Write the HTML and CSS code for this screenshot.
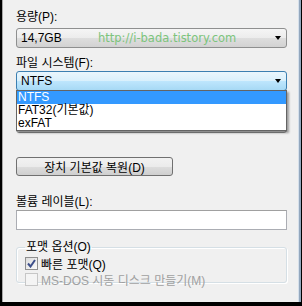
FILE: index.html
```html
<!DOCTYPE html>
<html>
<head>
    <title>포맷</title>
    <link rel="stylesheet" href="styles.css">
</head>
<body>
    <div class="frame">
        <div class="label">용량(P):</div>
        <div class="combo">
            <span class="value">14,7GB</span>
            <span class="watermark">http://i-bada.tistory.com</span>
            <span class="arrow"></span>
        </div>

        <div class="label gap-8">파일 시스템(F):</div>
        <div class="dropdown">
            <div class="combo focused">
                <span class="value">NTFS</span>
                <span class="arrow"></span>
            </div>
            <ul class="list">
                <li class="selected">NTFS</li>
                <li>FAT32(기본값)</li>
                <li>exFAT</li>
            </ul>
        </div>

        <!-- allocation size row, covered by the open list -->
        <div class="label gap-4"></div>
        <div class="combo">
            <span class="value"></span>
            <span class="arrow"></span>
        </div>

        <button class="button" type="button">장치 기본값 복원(D)</button>

        <div class="label gap-19">볼륨 레이블(L):</div>
        <div class="textbox"></div>

        <fieldset class="group">
            <legend>포맷 옵션(O)</legend>
            <label class="check">
                <span class="box checked">
                    <svg width="9" height="9" viewBox="0 0 9 9"><path d="M1 4.5 L3.5 7.5 L8 1" fill="none" stroke="#3d4f8a" stroke-width="2"/></svg>
                </span>
                빠른 포맷(Q)
            </label>
            <label class="check disabled">
                <span class="box"></span>
                MS-DOS 시동 디스크 만들기(M)
            </label>
        </fieldset>
    </div>
</body>
</html>
```

FILE: styles.css
```css
html, body {
    margin: 0;
    padding: 0;
}
body {
    background-color: #000;
    font-family: "Liberation Sans", "Noto Sans CJK KR", sans-serif;
    font-size: 12px;
    color: #000;
}
.frame {
    width: 271px;
    height: 292px;
    margin: 0 4px 0 2px;
    padding: 10px 12px 0 13px;
    background-color: #f0f0f0;
    border-left: 1px solid #a8a8a8;
    border-right: 2px solid #93a7bd;
    box-shadow: inset -1px 0 0 #d4dfeb;
}
.label {
    line-height: 15px;
    height: 15px;
}
.gap-4 { margin-top: 4px; }
.gap-8 { margin-top: 8px; }
.gap-19 { margin-top: 19px; }
.combo {
    position: relative;
    display: flex;
    align-items: center;
    height: 18px;
    margin-top: 3px;
    padding-left: 4px;
    border: 1px solid #8e8f8f;
    border-radius: 3px;
    background: linear-gradient(#f5f5f5, #ececec 50%, #dedede 51%, #d2d2d2);
}
.combo.focused {
    margin-top: 0;
    border-color: #3c7fb1;
    background: linear-gradient(#eaf6fd, #d9f0fc 50%, #bee6fd 51%, #a7d9f5);
}
.value {
    flex: 1;
    line-height: 15px;
}
.watermark {
    position: absolute;
    left: 81px;
    top: 2px;
    font-family: "DejaVu Sans", sans-serif;
    font-size: 11.5px;
    color: #7cc47c;
}
.arrow {
    width: 0;
    height: 0;
    margin-right: 5px;
    border-left: 3.5px solid transparent;
    border-right: 3.5px solid transparent;
    border-top: 4px solid #000;
}
.dropdown {
    position: relative;
}
.list {
    position: absolute;
    left: 0;
    right: 0;
    top: 19px;
    margin: 0;
    padding: 0;
    list-style: none;
    background-color: #fff;
    border: 1px solid #646464;
    box-shadow: 2px 2px 2px rgba(0,0,0,0.35);
    z-index: 2;
}
.list li {
    height: 13px;
    line-height: 13px;
    padding-left: 1px;
}
.list li.selected {
    background-color: #3399ff;
    color: #fff;
}
.button {
    display: block;
    width: 157px;
    height: 19px;
    margin-top: 24px;
    padding: 0;
    font-family: inherit;
    font-size: 12px;
    color: #000;
    border: 1px solid #707070;
    border-radius: 3px;
    background: linear-gradient(#f2f2f2, #ebebeb 50%, #dddddd 51%, #cfcfcf);
}
.textbox {
    height: 18px;
    border: 1px solid #abadb3;
    border-top-color: #a0a0a0;
    background-color: #fff;
}
.group {
    margin: 10px 0 0 0;
    padding: 0 0 9px 8px;
    height: 32px;
    border: 1px solid #d5dfe5;
    border-radius: 3px;
    box-shadow: inset 1px 1px 0 #fff, 1px 1px 0 #fff;
}
.group legend {
    margin-left: 0;
    padding: 0 1px;
    line-height: 15px;
}
.check {
    display: flex;
    align-items: center;
    height: 16px;
}
.box {
    display: flex;
    align-items: center;
    justify-content: center;
    width: 11px;
    height: 11px;
    margin-right: 3px;
    border: 1px solid #8f8f8f;
    background: linear-gradient(135deg, #dcdcdc, #fbfbfb);
}
.check.disabled {
    color: #a0a0a0;
}
.check.disabled .box {
    border-color: #c6c6c6;
    background: #f4f4f4;
}
```
